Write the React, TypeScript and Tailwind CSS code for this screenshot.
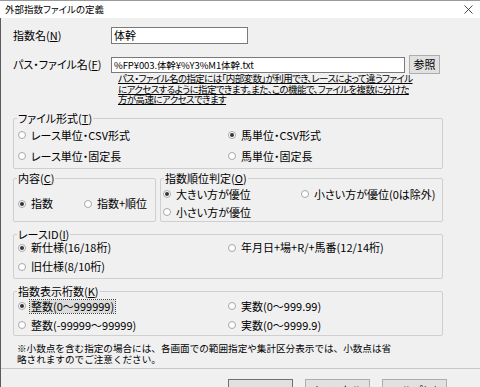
import React from "react";

const JP = "font-['Noto_Sans_CJK_JP',sans-serif] [font-feature-settings:'palt']";

function Radio({ checked = false, label, focus = false }: { checked?: boolean; label: string; focus?: boolean }) {
  return (
    <div className="flex items-center h-full">
      <span className="w-[8px] h-[8px] rounded-full border border-[#a8a8a8] bg-white flex items-center justify-center shrink-0">
        {checked && <span className="w-[4px] h-[4px] rounded-full bg-[#333]" />}
      </span>
      <span
        className={`ml-[4px] px-px leading-[13px] whitespace-nowrap ${
          focus ? "bg-[#dcdcdc] outline outline-1 outline-dotted outline-[#444]" : ""
        }`}
      >
        {label}
      </span>
    </div>
  );
}

function Legend({ children }: { children: React.ReactNode }) {
  return <div className="-mt-[7px] ml-[3px] px-px w-fit h-[13px] leading-[13px] bg-[#f0f0f0]">{children}</div>;
}

export default function App() {
  return (
    <div className={`w-[480px] h-[387px] overflow-hidden bg-[#f0f0f0] text-[11px] text-black ${JP}`}>
      {/* title bar */}
      <div className="h-[18px] bg-white flex items-center justify-between pl-[5px] pr-[6px] border-t border-[#9a9a9a]">
        <span className="text-[9.5px] leading-none">外部指数ファイルの定義</span>
        <svg width="9" height="9" viewBox="0 0 9 9" className="mr-[1px]">
          <path d="M0.5 0.5 L8.5 8.5 M8.5 0.5 L0.5 8.5" stroke="#333" strokeWidth="0.9" />
        </svg>
      </div>

      <div className="h-[369px] border-l border-[#5a5a5a] pl-[12px] pt-[9px]">
        {/* 指数名 */}
        <div className="flex items-center h-[17px]">
          <span className="w-[98px]">指数名(<span className="underline">N</span>)</span>
          <div className="w-[137px] h-[17px] bg-white border border-[#7a7a7a] pl-[2px] leading-[15px]">体幹</div>
        </div>

        {/* パス・ファイル名 */}
        <div className="flex items-center h-[19px] mt-[11px]">
          <span className="w-[98px]">パス・ファイル名(<span className="underline">F</span>)</span>
          <div className="w-[294px] h-[16px] bg-white border border-[#7a7a7a] pl-[2px] text-[9.5px] leading-[14px] whitespace-nowrap tracking-[-0.1px] [font-feature-settings:normal]">
            %FP¥003.体幹¥%Y3%M1体幹.txt
          </div>
          <div className="ml-[4px] w-[31px] h-[19px] bg-[#e1e1e1] border border-[#adadad] flex items-center justify-center leading-none">
            参照
          </div>
        </div>

        <div className="ml-[105px] mt-[-1px] h-[32px] text-[9.5px] tracking-[-0.6px] leading-[10.5px] underline whitespace-nowrap">
          <div>パス・ファイル名の指定には「内部変数」が利用でき、レースによって違うファイル</div>
          <div>にアクセスするように指定できます。また、この機能で、ファイルを複数に分けた</div>
          <div>方が高速にアクセスできます</div>
        </div>

        {/* ファイル形式 */}
        <div className="mt-[13px] w-[430px] border border-[#cfcfcf] rounded-[2px] pb-[2px]">
          <Legend>ファイル形式(<span className="underline">T</span>)</Legend>
          <div className="grid grid-cols-[210px_1fr] grid-rows-[20px_20px] gap-y-px pl-[4px]">
            <Radio label="レース単位・CSV形式" />
            <Radio checked label="馬単位・CSV形式" />
            <Radio label="レース単位・固定長" />
            <Radio label="馬単位・固定長" />
          </div>
        </div>

        {/* 内容 / 指数順位判定 */}
        <div className="mt-[9px] flex gap-[4px]">
          <div className="w-[143px] border border-[#cfcfcf] rounded-[2px]">
            <Legend>内容(<span className="underline">C</span>)</Legend>
            <div className="grid grid-cols-[66px_1fr] h-[19px] mt-[9px] pl-[4px]">
              <Radio checked label="指数" />
              <Radio label="指数+順位" />
            </div>
          </div>
          <div className="w-[283px] border border-[#cfcfcf] rounded-[2px]">
            <Legend>指数順位判定(<span className="underline">O</span>)</Legend>
            <div className="grid grid-cols-[138px_1fr] grid-rows-[18px_18px] pl-[2px]">
              <Radio checked label="大きい方が優位" />
              <Radio label="小さい方が優位(0は除外)" />
              <Radio label="小さい方が優位" />
            </div>
          </div>
        </div>

        {/* レースID */}
        <div className="mt-[12px] w-[430px] border border-[#cfcfcf] rounded-[2px] pb-[5px]">
          <Legend>レースID(<span className="underline">I</span>)</Legend>
          <div className="grid grid-cols-[210px_1fr] grid-rows-[13px_13px] gap-y-[6px] pl-[4px]">
            <Radio checked label="新仕様(16/18桁)" />
            <Radio label="年月日+場+R/+馬番(12/14桁)" />
            <Radio label="旧仕様(8/10桁)" />
          </div>
        </div>

        {/* 指数表示桁数 */}
        <div className="mt-[12px] w-[430px] border border-[#cfcfcf] rounded-[2px] pb-[2px]">
          <Legend>指数表示桁数(<span className="underline">K</span>)</Legend>
          <div className="grid grid-cols-[210px_1fr] grid-rows-[16px_16px] gap-y-[3px] pl-[4px]">
            <Radio checked focus label="整数(0～999999)" />
            <Radio label="実数(0～999.99)" />
            <Radio label="整数(-99999～99999)" />
            <Radio label="実数(0～9999.9)" />
          </div>
        </div>

        <div className="mt-[7px] ml-[4px] h-[22px] text-[9.6px] leading-[10.5px] whitespace-nowrap [font-feature-settings:normal]">
          <div>※小数点を含む指定の場合には、各画面での範囲指定や集計区分表示では、小数点は省</div>
          <div>略されますのでご注意ください。</div>
        </div>

        <div className="mt-[3px] -ml-[12px] border-t border-[#c8c8c8]" />

        <div className="mt-[10px] flex gap-[12px] pl-[215px]">
          <div className="w-[65px] h-[22px] bg-[#e1e1e1] border border-[#707070] flex items-center justify-center">OK</div>
          <div className="w-[65px] h-[22px] bg-[#e1e1e1] border border-[#adadad] flex items-center justify-center">キャンセル</div>
          <div className="w-[65px] h-[22px] bg-[#e1e1e1] border border-[#adadad] flex items-center justify-center">
            ヘルプ(<span className="underline">H</span>)
          </div>
        </div>
      </div>
    </div>
  );
}
